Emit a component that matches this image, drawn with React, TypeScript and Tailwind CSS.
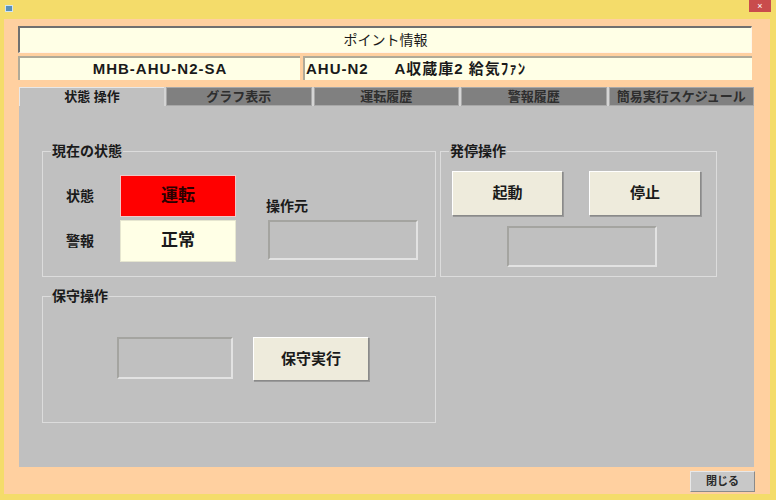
import React from 'react';

const font = { fontFamily: '"Liberation Sans", "Noto Sans CJK JP", sans-serif' };

const Field = ({ className }: { className: string }) => (
  <div className={`bg-[#c0c0c0] border-2 border-t-[#a4a4a0] border-l-[#a4a4a0] border-b-[#e2e2e2] border-r-[#e2e2e2] ${className}`} />
);

const Btn = ({ label, className }: { label: string; className: string }) => (
  <button className={`bg-[#eeebdc] border border-t-white border-l-white border-b-[#8a8a8a] border-r-[#8a8a8a] shadow-[1px_1px_0_#9a9a9a] flex items-center justify-center text-[15px] font-bold text-[#1a1a1a] ${className}`}>
    {label}
  </button>
);

const Group = ({ title, className, children }: { title: string; className: string; children: React.ReactNode }) => (
  <fieldset className={`border border-[#dcdcdc] min-w-0 ${className}`}>
    <legend className="ml-[8px] px-[1px] text-[14px] leading-[16px] font-bold text-[#1a1a1a]">{title}</legend>
    {children}
  </fieldset>
);

const tabs = ['状態 操作', 'グラフ表示', '運転履歴', '警報履歴', '簡易実行スケジュール'];

export default function App() {
  return (
    <div className="w-[776px] h-[500px] bg-[#f4dc6a] flex flex-col overflow-hidden" style={font}>
      <div className="h-[19px] flex items-start justify-between">
        <div className="mt-[5px] ml-[5px] w-[8px] h-[7px] bg-[#5a8fb8] border border-[#d0e4f0]" />
        <div className="w-[22px] h-[12px] mr-[5px] bg-[#c94c4c] flex items-center justify-center text-white text-[9px] leading-none">×</div>
      </div>

      <div className="flex-1 ml-[4px] mr-[6px] mb-[6px] bg-[#ffd0a0] flex flex-col pl-[14px] pr-[18px] pt-[7px]">
        <div className="h-[27px] bg-[#ffffe6] border-t-2 border-l-2 border-[#707070] border-b border-r border-b-[#fff6e8] border-r-[#fff6e8] flex items-center justify-center text-[14px] text-[#1a1a1a]">
          ポイント情報
        </div>

        <div className="mt-[3px] h-[24px] flex gap-[3px] text-[15px] font-bold tracking-[1px] text-[#1a1a1a]">
          <div className="w-[282px] bg-[#ffffe6] border-t-2 border-l-2 border-[#b0aa98] flex items-center justify-center">
            MHB-AHU-N2-SA
          </div>
          <div className="flex-1 bg-[#ffffe6] border-t-2 border-l-2 border-[#b0aa98] flex items-center pl-[1px] whitespace-pre">
            {'AHU-N2　  A収蔵庫2 給気ﾌｧﾝ'}
          </div>
        </div>

        <div className="mt-[7px] ml-[1px] w-[735px] h-[19px] flex gap-[2px] bg-[#d4d4d4]">
          {tabs.map((t, i) =>
            i === 0 ? (
              <div key={t} className="w-[145px] bg-[#c0c0c0] border-t border-l border-[#e8e8e8] flex items-center justify-center text-[13px] font-bold text-[#1a1a1a]">
                {t}
              </div>
            ) : (
              <div key={t} className="flex-1 bg-[#808080] border border-[#a8a8a8] flex items-center justify-center text-[13px] font-bold text-[#2e2e2e]">
                {t}
              </div>
            )
          )}
        </div>

        <div className="ml-[1px] w-[735px] h-[361px] bg-[#c0c0c0] pl-[23px] pt-[37px] flex gap-[4px] items-start">
          <div className="w-[394px] flex flex-col">
            <Group title="現在の状態" className="h-[134px]">
              <div className="flex pl-[23px] pt-[16px]">
                <div className="flex flex-col gap-[3px]">
                  <div className="flex items-center h-[42px]">
                    <span className="w-[54px] text-[14px] font-bold text-[#1a1a1a]">状態</span>
                    <div className="w-[116px] h-[42px] bg-[#ff0000] border border-[#f0c8c8] flex items-center justify-center text-[17px] font-bold text-[#2a0000]">
                      運転
                    </div>
                  </div>
                  <div className="flex items-center h-[42px]">
                    <span className="w-[54px] text-[14px] font-bold text-[#1a1a1a]">警報</span>
                    <div className="w-[116px] h-[42px] bg-[#ffffe6] border border-[#e6e6d0] flex items-center justify-center text-[17px] font-bold text-[#1a1a1a]">
                      正常
                    </div>
                  </div>
                </div>
                <div className="ml-[30px] mt-[23px] flex flex-col">
                  <span className="text-[14px] leading-[16px] font-bold text-[#1a1a1a]">操作元</span>
                  <Field className="mt-[6px] ml-[2px] w-[150px] h-[40px]" />
                </div>
              </div>
            </Group>

            <Group title="保守操作" className="mt-[11px] h-[135px]">
              <div className="flex items-start gap-[20px] pl-[74px] pt-[33px]">
                <Field className="w-[116px] h-[42px]" />
                <Btn label="保守実行" className="w-[116px] h-[44px]" />
              </div>
            </Group>
          </div>

          <Group title="発停操作" className="w-[277px] h-[134px]">
            <div className="flex flex-col pl-[11px] pt-[12px]">
              <div className="flex gap-[26px]">
                <Btn label="起動" className="w-[111px] h-[45px]" />
                <Btn label="停止" className="w-[112px] h-[45px]" />
              </div>
              <Field className="mt-[10px] ml-[55px] w-[150px] h-[41px]" />
            </div>
          </Group>
        </div>

        <div className="flex justify-end mt-[4px] -mr-[3px]">
          <button className="w-[65px] h-[21px] bg-[#c8c8c8] border border-t-[#e8e8e8] border-l-[#e8e8e8] border-b-[#8a8a8a] border-r-[#8a8a8a] text-[11px] font-bold text-[#2a2a2a] flex items-center justify-center">
            閉じる
          </button>
        </div>
      </div>
    </div>
  );
}
